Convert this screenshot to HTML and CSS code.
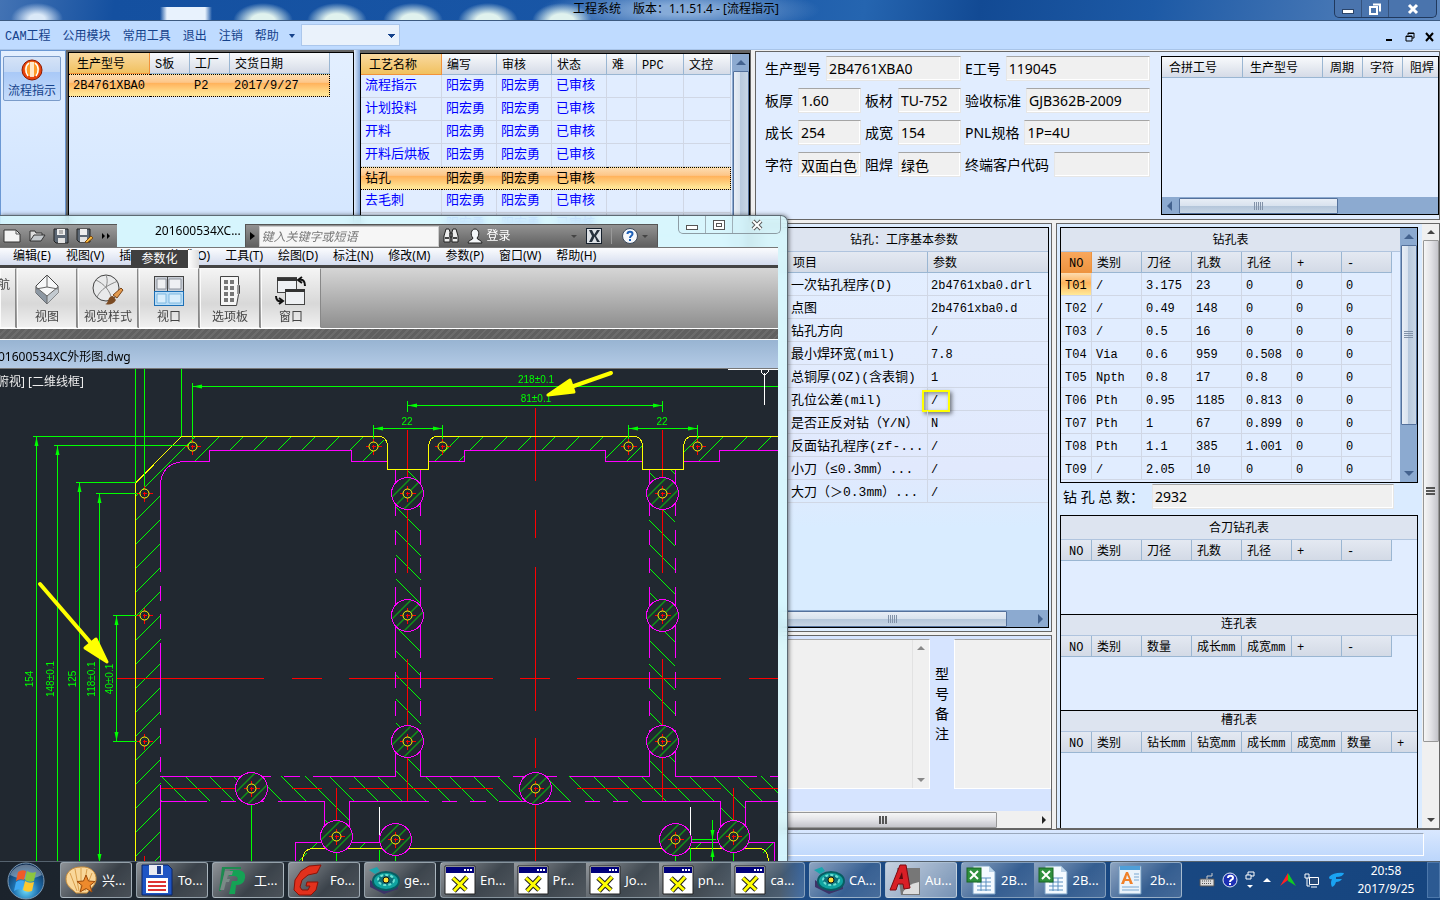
FILE: index.html
```html
<!DOCTYPE html>
<html lang="zh-CN">
<head>
  <meta charset="UTF-8" />
  <meta name="viewport" content="width=device-width, initial-scale=1.0" />
  <title>工程系统</title>
  <link rel="stylesheet" href="styles.css">
</head>

<body>

  <!-- Main window -->
  <div class="app">
    <header class="titlebar">
      <span class="titlebar-text">工程系统　版本：1.1.51.4 - [流程指示]</span>
      <div class="winbtns">
        <button aria-label="最小化"><svg width="14" height="12"><rect x="1.500" y="6.500" width="11" height="4" fill="#fff" stroke="#2b4468"/></svg></button>
        <button aria-label="还原"><svg width="14" height="14"><path d="M5 2.500h7v7M2 5h7v7H2z" fill="none" stroke="#fff" stroke-width="2"/></svg></button>
        <button class="wide" aria-label="关闭"><svg width="14" height="12"><path d="M3 2l8 8M11 2l-8 8" stroke="#fff" stroke-width="3"/></svg></button>
      </div>
    </header>

    <nav class="menubar">
      <a href="#">CAM工程</a>
      <a href="#">公用模块</a>
      <a href="#">常用工具</a>
      <a href="#">退出</a>
      <a href="#">注销</a>
      <a href="#">帮助</a>
      <span class="caret"></span>
      <select class="combo" aria-label="快速选择"><option></option></select>
      <div class="mdi">
        <button aria-label="最小化"><svg width="10" height="10"><path d="M1 8h6" stroke="#000" stroke-width="2"/></svg></button>
        <button aria-label="还原"><svg width="10" height="10"><path d="M3 3V1h6v5H7M1 4h6v5H1zM3 1.500h6M1 4.500h6" fill="none" stroke="#000"/></svg></button>
        <button aria-label="关闭"><svg width="10" height="10"><path d="M1 1l7 8M8 1L1 9" stroke="#000" stroke-width="2"/></svg></button>
      </div>
    </nav>

    <div class="workspace">
      <aside class="sidebar">
        <button class="side-btn">
          <svg width="24" height="22" viewBox="0 0 24 22">
            <circle cx="12" cy="11" r="10" fill="#e8420c" stroke="#8c1a00"/>
            <circle cx="12" cy="10" r="7.500" fill="#ff9c2a"/>
            <path d="M9 4c-4 3-4 9-1 13M11 3v15M13 3v15M15 4c4 3 4 9 1 13" fill="none" stroke="#fff" stroke-width="1.500"/>
          </svg>
          <span>流程指示</span>
        </button>
      </aside>

      <section class="orders grid-box">
        <table class="grid">
          <thead><tr><th class="hot w81">生产型号</th><th class="w40">S板</th><th class="w40">工厂</th><th class="w100">交货日期</th></tr></thead>
          <tbody><tr class="picked"><td>2B4761XBA0</td><td></td><td>P2</td><td>2017/9/27</td></tr></tbody>
        </table>
      </section>

      <div class="splitter"></div>

      <section class="process grid-box">
        <table class="grid blue">
          <thead><tr><th class="hot w81">工艺名称</th><th class="w55">编写</th><th class="w55">审核</th><th class="w55">状态</th><th class="w30">难</th><th class="w47">PPC</th><th class="w47">文控</th></tr></thead>
          <tbody id="process"></tbody>
        </table>
        <div class="vscroll blue-bar">
          <i class="up"></i>
          <div class="thumb fill"></div>
        </div>
      </section>

      <main class="main">
        <section class="info panel">
          <form class="fields">
            <div class="field"><label for="f1">生产型号</label><input id="f1" value="2B4761XBA0" readonly></div>
            <div class="field"><label for="f2">E工号</label><input id="f2" value="119045" readonly></div>
            <div class="pair">
              <div class="field"><label for="f3">板厚</label><input id="f3" value="1.60" readonly></div>
              <div class="field"><label for="f4">板材</label><input id="f4" value="TU-752" readonly></div>
            </div>
            <div class="field"><label for="f5">验收标准</label><input id="f5" value="GJB362B-2009" readonly></div>
            <div class="pair">
              <div class="field"><label for="f6">成长</label><input id="f6" value="254" readonly></div>
              <div class="field"><label for="f7">成宽</label><input id="f7" value="154" readonly></div>
            </div>
            <div class="field"><label for="f8">PNL规格</label><input id="f8" value="1P=4U" readonly></div>
            <div class="pair">
              <div class="field"><label for="f9">字符</label><input id="f9" value="双面白色字" readonly></div>
              <div class="field"><label for="f10">阻焊</label><input id="f10" value="绿色" readonly></div>
            </div>
            <div class="field"><label for="f11">终端客户代码</label><input id="f11" value="" readonly></div>
          </form>
          <div class="merge grid-box">
            <table class="grid">
              <thead><tr><th class="w81">合拼工号</th><th class="w80">生产型号</th><th class="w40">周期</th><th class="w40">字符</th><th class="w40">阻焊</th></tr></thead>
            </table>
            <div class="hscroll blue-bar">
              <i class="left"></i>
              <div class="thumb short"><b></b></div>
            </div>
          </div>
        </section>

        <div class="lower">
          <div class="middle">
            <section class="params panel">
              <div class="grid-box stack">
                <h3>钻孔：工序基本参数</h3>
                <table class="grid mixed">
                  <thead><tr><th class="w28"></th><th class="w140">项目</th><th class="w121">参数</th></tr></thead>
                  <tbody id="params"></tbody>
                </table>
                <div class="hscroll blue-bar">
                  <div class="thumb long"><b></b></div>
                  <i class="right"></i>
                </div>
              </div>
            </section>
            <section class="notes panel">
              <div class="notes-row">
                <div class="memo">
                  <textarea aria-label="备注" readonly></textarea>
                  <div class="vscroll gray-bar off"><i class="up"></i><i class="down"></i></div>
                </div>
                <label class="vlabel" for="remark">型号备注</label>
                <textarea id="remark" readonly></textarea>
              </div>
              <div class="hscroll gray-bar">
                <div class="thumb long"><b></b></div>
                <i class="right"></i>
              </div>
            </section>
          </div>

          <section class="holes panel">
            <div class="holes-body">
              <div class="grid-box drill">
                <div class="drill-main">
                  <h3>钻孔表</h3>
                  <table class="grid">
                    <thead><tr><th class="w31 now">NO</th><th class="w50">类别</th><th class="w50">刀径</th><th class="w50">孔数</th><th class="w50">孔径</th><th class="w50">+</th><th class="w50">-</th></tr></thead>
                    <tbody id="drill"></tbody>
                  </table>
                </div>
                <div class="vscroll blue-bar">
                  <i class="up"></i>
                  <div class="thumb mid"><b></b></div>
                  <i class="down"></i>
                </div>
              </div>
              <div class="total"><label for="total">钻 孔 总 数：</label><input id="total" value="2932" readonly></div>
              <div class="grid-box sub first">
                <h3>合刀钻孔表</h3>
                <table class="grid">
                  <thead><tr><th class="w31">NO</th><th class="w50">类别</th><th class="w50">刀径</th><th class="w50">孔数</th><th class="w50">孔径</th><th class="w50">+</th><th class="w50">-</th></tr></thead>
                </table>
              </div>
              <div class="grid-box sub">
                <h3>连孔表</h3>
                <table class="grid">
                  <thead><tr><th class="w31">NO</th><th class="w50">类别</th><th class="w50">数量</th><th class="w50">成长mm</th><th class="w50">成宽mm</th><th class="w50">+</th><th class="w50">-</th></tr></thead>
                </table>
              </div>
              <div class="grid-box sub last">
                <h3>槽孔表</h3>
                <table class="grid">
                  <thead><tr><th class="w31">NO</th><th class="w50">类别</th><th class="w50">钻长mm</th><th class="w50">钻宽mm</th><th class="w50">成长mm</th><th class="w50">成宽mm</th><th class="w50">数量</th><th class="w50">+</th></tr></thead>
                </table>
              </div>
            </div>
            <div class="vscroll gray-bar">
              <i class="up"></i>
              <div class="thumb tall"><b></b></div>
              <i class="down"></i>
            </div>
          </section>
        </div>
      </main>
    </div>

    <footer class="statusbar"><div></div></footer>
  </div>

  <!-- CAD window on top -->
  <div class="cad">
    <div class="cad-caption">
      <div class="quick">
        <button aria-label="新建"><svg width="18" height="16"><path d="M1 2h12l4 4v8H1z" fill="#f4f4f4" stroke="#333"/><path d="M13 2v4h4" fill="none" stroke="#555"/></svg></button>
        <button aria-label="打开"><svg width="18" height="16"><path d="M2 13V3h5l1 2h6v2" fill="#ddd" stroke="#333"/><path d="M2 13l4-6h11l-4 6z" fill="#c4c9cd" stroke="#333"/></svg></button>
        <button aria-label="保存"><svg width="16" height="16"><path d="M1 1h14v14H3l-2-2z" fill="#5d6875" stroke="#222"/><path d="M4 1h8v6H4z" fill="#eee"/><path d="M5 10h7v5H5z" fill="#e2e2e2"/><path d="M6 3h4M6 5h4" stroke="#777"/></svg></button>
        <button aria-label="另存为"><svg width="18" height="16"><path d="M1 1h13v13H3l-2-2z" fill="#5d6875" stroke="#222"/><path d="M4 1h7v6H4z" fill="#eee"/><path d="M4 9h7v5H4z" fill="#e2e2e2"/><path d="M9 14l6-6 2 2-6 5z" fill="#f6b93f" stroke="#7c4a10"/></svg></button>
        <button aria-label="更多"><svg width="10" height="8"><path d="M1 1l3 3-3 3zM6 1l3 3-3 3z" fill="#000"/></svg></button>
      </div>
      <div class="cad-name">201600534XC...</div>
      <div class="infocenter">
        <button class="play" aria-label="展开"><svg width="5" height="8"><path d="M0 0l5 4-5 4z" fill="#000"/></svg></button>
        <input class="search" placeholder="键入关键字或短语" aria-label="搜索">
        <svg width="16" height="16"><path d="M3 1h3l1 3v10H1V8zM10 1h3l2 7v6H9V4z" fill="#eee" stroke="#222"/><path d="M7 5h2v4H7z" fill="#888" stroke="#222"/><path d="M2 10h4M10 10h4" stroke="#444" stroke-width="2"/></svg>
        <svg class="user" width="16" height="16"><path d="M1 15c0-3 5-3 5-5C3 7 4 1 8 1s5 6 2 9c0 2 5 2 5 5z" fill="#f4f6f8" stroke="#222"/></svg>
        <span class="login">登录</span>
        <i class="dn"></i>
        <svg width="16" height="16"><rect x=".5" y=".5" width="15" height="15" fill="#dde1e6" stroke="#16202c"/><path d="M3 2l3 6-3 6h3l3-6-3-6zM14 2h-3L8 7l3 7h3l-4-6z" fill="#26303c"/></svg>
        <span class="bar"></span>
        <svg width="18" height="18" viewBox="0 0 18 18"><circle cx="9" cy="9" r="7.500" fill="#f5f8fc" stroke="#3c4a5c"/><path d="M6.500 7c0-3 5-3 5 0 0 2-2.500 1.500-2.500 4M9 12v2" fill="none" stroke="#1b5fb8" stroke-width="2"/></svg>
        <i class="dn"></i>
      </div>
      <div class="glass-btns">
        <button aria-label="最小化"><svg width="14" height="12"><rect x="1.500" y="6.500" width="11" height="4" fill="#fff" stroke="#555"/></svg></button>
        <button aria-label="最大化"><svg width="14" height="12"><rect x="1.500" y="1.500" width="11" height="9" fill="#fff" stroke="#555"/><rect x="4.500" y="4.500" width="5" height="3" fill="#fff" stroke="#555"/></svg></button>
        <button class="wide" aria-label="关闭"><svg width="14" height="12"><path d="M3 2l8 8M11 2l-8 8" stroke="#555" stroke-width="4"/><path d="M3 2l8 8M11 2l-8 8" stroke="#fff" stroke-width="2"/></svg></button>
      </div>
    </div>

    <nav class="cad-menu">
      <a href="#">编辑(E)</a><a href="#">视图(V)</a><a href="#">插入(I)</a><a href="#">格式(O)</a><a href="#">工具(T)</a><a href="#">绘图(D)</a><a href="#">标注(N)</a><a href="#">修改(M)</a><a href="#">参数(P)</a><a href="#">窗口(W)</a><a href="#">帮助(H)</a>
      <div class="tab-pop"><span>参数化</span><i></i></div>
    </nav>

    <div class="ribbon">
      <button class="cut">航</button>
      <button>
        <svg width="30" height="34" viewBox="0 0 30 34"><path d="M15 2l11 11v7L15 31 4 20v-7z" fill="#f7f8f9" stroke="#444"/><path d="M4 14l11 9v8L4 20z" fill="#8d98a3"/><path d="M26 14l-11 9v8l11-11z" fill="#c3cad0"/><path d="M15 2v12L4 16M15 14l11 2M15 23v8M4 14l11 9 11-9" fill="none" stroke="#666"/></svg>
        <span>视图</span>
      </button>
      <button>
        <svg width="34" height="34" viewBox="0 0 34 34"><circle cx="15" cy="15" r="13" fill="#e9eaeb" stroke="#444"/><path d="M5 7c8 4 14 10 16 20M27 8C17 12 10 16 6 24M15 2c2 5 1 9 0 13" fill="none" stroke="#888"/><path d="M22 22l8-7 2 2-6 8z" fill="#e39a4e" stroke="#7a4417"/><path d="M14 31c4 0 2-8 8-8l3 4c-3 5-7 5-11 4z" fill="#7a4a22"/></svg>
        <span>视觉样式</span>
      </button>
      <button>
        <svg width="32" height="32" viewBox="0 0 32 32"><rect x="1.500" y="1.500" width="29" height="15" fill="#c9ced6" stroke="#444"/><path d="M4 4h9v10H4zM16 4h12v10H16z" fill="#eef0f3" stroke="#8c929c"/><path d="M14.500 1v15" stroke="#444"/><rect x="1.500" y="16.500" width="29" height="14" fill="#b9dcf5" stroke="#1d6fb5"/><path d="M4 19h9v9H4zM16 19h12v9H16z" fill="#d8edfb" stroke="#7fb9e2"/></svg>
        <span>视口</span>
      </button>
      <button>
        <svg width="24" height="32" viewBox="0 0 24 32"><path d="M2.500 1.500h18v8l1 1v8l-1 1-2 11h-16z" fill="#f6f6f6" stroke="#444"/><path d="M6 5h4v4H6zM12 5h4v4h-4zM6 11h4v4H6zM12 11h4v4h-4zM6 17h4v4H6zM12 17h4v4h-4zM6 23h4v4H6zM12 23h4v4h-4z" fill="#777"/><path d="M19 10h2v9h-2z" fill="#999"/></svg>
        <span>选项板</span>
      </button>
      <button>
        <svg width="32" height="32" viewBox="0 0 32 32"><rect x="2.500" y="2.500" width="19" height="15" fill="#eef0f3" stroke="#444"/><path d="M2 3h20v3H2z" fill="#333"/><rect x="10.500" y="14.500" width="19" height="15" fill="#eef0f3" stroke="#444"/><path d="M10 14h20v3H10z" fill="#333"/><path d="M24 5c4-1 6 1 6 6M27 2l-4 3 4 3M1 21c0 4 2 6 6 5M4 23l4 3-4 3" fill="none" stroke="#111" stroke-width="2"/></svg>
        <span>窗口</span>
      </button>
    </div>
    <div class="dock"></div>
    <div class="doc-title">01600534XC外形图.dwg</div>

    <svg class="drawing" width="778" height="492" viewBox="0 369 778 492" shape-rendering="crispEdges">
      <defs>
        <pattern id="hatchA" x="8" y="0" width="24" height="24" patternUnits="userSpaceOnUse"><path d="M-2 26L26-2M-2 2L2-2M22 26L26 22" stroke="#0f0" shape-rendering="auto"/></pattern>
        <pattern id="hatchB" x="0" y="15" width="24" height="24" patternUnits="userSpaceOnUse"><path d="M-2-2L26 26M22-2L26 2M-2 22L2 26" stroke="#0f0" shape-rendering="auto"/></pattern>
        <pattern id="hatchC" width="12" height="12" patternUnits="userSpaceOnUse"><path d="M-2 14L14-2M-2 2L2-2M10 14L14 10" stroke="#0f0" shape-rendering="auto"/></pattern>
        <g id="hole">
          <path d="M-8 0h16M0-8v16" stroke="#f00"/>
          <circle r="4.500" fill="#212830" stroke="#ff0" shape-rendering="auto"/>
          <path d="M-2 0h4M0-2v4" stroke="#f00"/>
        </g>
        <g id="pad">
          <circle r="16" fill="#212830"/>
          <circle r="16" fill="url(#hatchC)" stroke="#f0f"/>
          <use href="#hole"/>
        </g>
        <path id="head" d="M0 0l9-2v4z" fill="#0f0"/>
      </defs>

      <!-- hatching -->
      <path fill="url(#hatchA)" d="M136 861V483l46-47h198l7 8v17h-36v-11H209v11h-26q-20 3-22 22v378zM429 461v-18l7-7h199l7 7v18h-37v-11H464v11zM684 461v-18l7-7h87v14h-59v11z"/>
      <path fill="url(#hatchB)" d="M396 470h25v306h228V470h26v306h103v25h-32v35h-26v-35H350v35h-26v-35H161v-25h235z"/>
      <path fill="url(#hatchA)" d="M296 861v-18h84v5h-70l-8 13zM690 843h84v18h-6l-8-13h-70z"/>

      <!-- centre lines -->
      <g stroke="#f00" fill="none">
        <path d="M117 678.500h147M292 678.500h30M349 678.500h144M520 678.500h30M577 678.500h144M749 678.500h29"/>
        <path d="M160 788.500h104M292 788.500h30M349 788.500h144M520 788.500h30M577 788.500h144M749 788.500h29"/>
        <path d="M407.500 430v143M407.500 659v143M662.500 430v143M662.500 659v143M336.500 788v62M733.500 788v62M144.500 856v5"/>
        <path d="M535.500 408v73M535.500 510v28M535.500 567v144M535.500 738v30M535.500 782v79"/>
      </g>

      <!-- inner contour -->
      <g stroke="#f0f" fill="none">
        <path d="M160.500 572v-89q2-19 22-21.500h27v-11h142v11h36M429 461.500h35.500v-11h141v11h37M684 461.500h35.500v-11H778"/>
        <path d="M160.500 586v15M160.500 614v15M160.500 643v72M160.500 728v16M160.500 757v15M160.500 785v76"/>
        <path d="M395.500 470v46M395.500 530v15M395.500 558v15M395.500 587v71M395.500 672v16M395.500 701v15M395.500 730v46.500H313M300 776.500h-16M271 776.500H160"/>
        <path d="M420.500 470v46M420.500 530v15M420.500 558v15M420.500 587v71M420.500 672v16M420.500 701v15M420.500 730v46.500H500M513 776.500h44M570 776.500h79.500V730"/>
        <path d="M649.500 470v46M649.500 530v15M649.500 558v15M649.500 587v71M649.500 672v16M649.500 701v15"/>
        <path d="M675.500 470v46M675.500 530v15M675.500 558v15M675.500 587v71M675.500 672v16M675.500 701v15M675.500 730v46.500H757M770 776.500h8"/>
        <path d="M160 801.500h47M221 801.500h15M249 801.500h15M278 801.500h46.500v41M349.500 842v-40.500H429M442 801.500h15M470 801.500h16M499 801.500h72M585 801.500h15M613 801.500h15M642 801.500h78.500v41M745.500 842v-40.500H778"/>
        <path d="M295.500 861v-18.500H380M690 842.500h84.500V861"/>
      </g>

      <!-- board outline -->
      <g stroke="#ff0" fill="none">
        <path d="M135.500 861V483l46-46.500H380q7 1 7.500 9v24h41V446q1-9 8-9.500H635q7 1 7.500 9v24h41V446q1-9 8-9.500H778"/>
        <path d="M302.500 861q0-11 9-12.500H760q8 1 8.500 12.500"/>
      </g>

      <!-- dimensions -->
      <g stroke="#0f0" fill="none">
        <path d="M135.500 369v114M144.500 369v124M181.500 369v67M192.500 383v63M192 386.500h586"/>
        <path d="M33 436.500h148M36.500 436v425M54 445.500h138M57.500 445v416M76 482.500h59M79.500 482v379M96 493.500h48M99.500 493v368M113 615.500h31M113 741.500h31M116.500 615v126"/>
        <path d="M407 405.500h255M407.500 401v11M662.500 401v11M373 428.500h69M628 428.500h69M373.500 425v21M442.500 425v21M628.500 425v21M697.500 425v21"/>
        <path d="M251.500 789v72M336.500 836v25M379.500 850v11M395.500 840v21M675.500 840v21M690.500 848v13M733.500 836v25M712.500 820v41M675 839.500h41"/>
      </g>
      <g shape-rendering="auto">
        <use href="#head" x="193" y="386.500"/>
        <use href="#head" x="408" y="405.500"/>
        <use href="#head" x="374" y="428.500"/>
        <use href="#head" x="629" y="428.500"/>
        <use href="#head" transform="translate(662 405.500) rotate(180)"/>
        <use href="#head" transform="translate(442 428.500) rotate(180)"/>
        <use href="#head" transform="translate(697 428.500) rotate(180)"/>
        <use href="#head" transform="translate(36.500 437) rotate(90)"/>
        <use href="#head" transform="translate(57.500 446) rotate(90)"/>
        <use href="#head" transform="translate(79.500 483) rotate(90)"/>
        <use href="#head" transform="translate(99.500 494) rotate(90)"/>
        <use href="#head" transform="translate(116.500 616) rotate(90)"/>
        <use href="#head" transform="translate(116.500 741) rotate(270)"/>
        <use href="#head" transform="translate(99.500 863) rotate(270)"/>
        <use href="#head" transform="translate(712.500 839) rotate(270)"/>
        <use href="#head" transform="translate(712.500 848) rotate(90)"/>
      </g>
      <g class="dim">
        <text x="536" y="383">218±0.1</text>
        <text x="536" y="402">81±0.1</text>
        <text x="407" y="425">22</text>
        <text x="662" y="425">22</text>
        <text transform="translate(33 679) rotate(-90)">154</text>
        <text transform="translate(54 679) rotate(-90)">148±0.1</text>
        <text transform="translate(76 679) rotate(-90)">125</text>
        <text transform="translate(95 679) rotate(-90)">118±0.1</text>
        <text transform="translate(113 679) rotate(-90)">40±0.1</text>
      </g>

      <!-- holes -->
      <use href="#hole" x="192.500" y="446.500"/><use href="#hole" x="144.500" y="493.500"/><use href="#hole" x="144.500" y="615.500"/><use href="#hole" x="144.500" y="741.500"/>
      <use href="#hole" x="373.500" y="446.500"/><use href="#hole" x="442.500" y="446.500"/><use href="#hole" x="628.500" y="446.500"/><use href="#hole" x="697.500" y="446.500"/>
      <use href="#pad" x="407.500" y="493.500"/><use href="#pad" x="407.500" y="615.500"/><use href="#pad" x="407.500" y="741.500"/>
      <use href="#pad" x="662.500" y="493.500"/><use href="#pad" x="662.500" y="615.500"/><use href="#pad" x="662.500" y="741.500"/>
      <use href="#pad" x="251.500" y="788.500"/><use href="#pad" x="535.500" y="788.500"/>
      <use href="#pad" x="336.500" y="836.500"/><use href="#pad" x="395.500" y="839.500"/><use href="#pad" x="675.500" y="839.500"/><use href="#pad" x="733.500" y="836.500"/>

      <path d="M379.500 807v28M690.500 807v28M728 369.500h50M764.500 373v32M761 370v2l2 2h3l2-2v-2" fill="none" stroke="#fff"/>
      <text class="view-label" x="84" y="386">俯视] [二维线框]</text>

      <!-- marker arrows -->
      <g shape-rendering="auto" fill="#ff0" stroke="#ff0" stroke-linecap="round" stroke-linejoin="round">
        <path d="M40 584l50 58" stroke-width="4"/>
        <path d="M107 662l-11-23-11 9z" stroke-width="3"/>
        <path d="M611 373l-40 14" stroke-width="4"/>
        <path d="M548 395l22-15 4 12z" stroke-width="3"/>
      </g>
    </svg>
  </div>

  <!-- Taskbar -->
  <svg class="sprites" width="0" height="0">
    <symbol id="i-x" viewBox="0 0 32 32"><path d="M1 2h30v28H1z" fill="#fff" stroke="#222"/><path d="M2 3h28v6H2z" fill="#00007b"/><path d="M20 5h2v2h-2zM23 5h2v2h-2zM26 5h2v2h-2z" fill="#fff"/><path d="M9 14l13 12M23 13L10 27" stroke="#222" stroke-width="5"/><path d="M9 14l13 12M23 13L10 27" stroke="#ff0" stroke-width="3"/></symbol>
    <symbol id="i-cam" viewBox="0 0 32 32"><path d="M1 6l8-3 3 4-5 3z" fill="#1ba6ad"/><path d="M2 16l14 10 14-6v5l-14 5L2 23z" fill="#3c3468"/><ellipse cx="18" cy="17" rx="13" ry="9" fill="#10a3a0" stroke="#075e63" stroke-width="2"/><ellipse cx="18" cy="16" rx="8" ry="5" fill="#0b6f78" stroke="#6ce0d2" stroke-dasharray="3 2" stroke-width="2"/><circle cx="18" cy="16" r="3" fill="#ffe03a" stroke="#111"/></symbol>
    <symbol id="i-xls" viewBox="0 0 32 32"><path d="M8 2h16l6 6v22H8z" fill="#f4faff" stroke="#7aa0c4"/><path d="M24 2v6h6z" fill="#bcd3e8"/><path d="M12 14h14M12 18h14M12 22h14M12 26h14M16 14v13M21 14v13" stroke="#5b8fc0"/><rect x="2" y="4" width="14" height="14" fill="#2f8f3c" stroke="#186423"/><path d="M5 7l8 8M13 7l-8 8" stroke="#fff" stroke-width="2"/></symbol>
  </svg>
  <div class="taskbar">
    <button class="start" aria-label="开始">
      <svg width="40" height="38" viewBox="0 0 40 38">
        <defs><radialGradient id="orb" cx=".5" cy=".75" r=".7"><stop offset="0" stop-color="#6fe0ff"/><stop offset=".5" stop-color="#1d6fae"/><stop offset="1" stop-color="#0d2c52"/></radialGradient></defs>
        <circle cx="20" cy="19" r="18" fill="url(#orb)" stroke="#7c9ab5"/>
        <path d="M4 13a17 16 0 0 1 32 0q-16 8-32 0z" fill="#fff" opacity=".35"/>
        <path d="M12 10q4-3 8-1l-2 9q-4-2-8 1z" fill="#f05a28"/><path d="M21 9q4 3 9 1l-2 9q-5 2-9-1z" fill="#8cc63f"/>
        <path d="M10 20q4-3 8-1l-2 9q-4-2-8 1z" fill="#3fa9f5"/><path d="M19 19q4 3 9 1l-2 9q-5 2-9-1z" fill="#fdc82f"/>
      </svg>
    </button>
    <button class="task"><svg width="34" height="32" viewBox="0 0 34 32"><path d="M17 3c10-1 16 6 15 13-1 6-6 9-9 13H12C8 25 2 22 2 15 2 8 8 3 17 3z" fill="#f9d79a" stroke="#c98d3a"/><path d="M17 4v24M11 5l4 22M23 5l-4 22M6 9l7 18M28 9l-7 18" stroke="#d99f4c" fill="none"/><path d="M22 11l2.500 6 6.500.5-5 4 2 6.500-6-3.500-6 3.500 2-6.500-5-4 6.500-.5z" fill="#ee8a2c" stroke="#9c4b0c"/></svg>兴...</button>
    <button class="task"><svg width="34" height="32" viewBox="0 0 34 32"><path d="M2 1h26l4 4v26H2z" fill="#1f55c4" stroke="#0b2566"/><path d="M9 1h14v10H9z" fill="#e9ecf2"/><path d="M17 2h4v8h-4z" fill="#1f3f8c"/><path d="M6 14h22v15H6z" fill="#fff"/><path d="M8 18h18M8 22h18M8 26h18" stroke="#d33" stroke-width="2"/></svg>To...</button>
    <button class="task"><svg width="34" height="32" viewBox="0 0 34 32"><path d="M6 3h19v2H9L5 27H3z" fill="#1d8a50"/><path d="M14 6h9q7 1 6 8-1 7-8 7h-1l-1 9h-6l3-13h5q2-4-2-5h-6z" fill="#15a255"/><path d="M9 7h8l-1 4h-4l-1 4h3l-1 3h-3l-2 8H4z" fill="#7a8a86"/></svg>工...</button>
    <button class="task"><svg width="34" height="32" viewBox="0 0 34 32"><path d="M29 1l-4 8-9 2-6 5-2 7 2 3h6l2-4h-4l1-4h11l-2 8-5 5H7l-5-5 1-10 6-9 8-5z" fill="#e2311d" stroke="#8c1207"/></svg>Fo...</button>
    <button class="task"><svg width="32" height="32"><use href="#i-cam"/></svg>ge...</button>
    <div class="group">
      <button class="task"><svg width="32" height="32"><use href="#i-x"/></svg>En...</button>
      <button class="task"><svg width="32" height="32"><use href="#i-x"/></svg>Pr...</button>
      <button class="task"><svg width="32" height="32"><use href="#i-x"/></svg>Jo...</button>
      <button class="task"><svg width="32" height="32"><use href="#i-x"/></svg>pn...</button>
      <button class="task"><svg width="32" height="32"><use href="#i-x"/></svg>ca...</button>
    </div>
    <button class="task"><svg width="32" height="32"><use href="#i-cam"/></svg>CA...</button>
    <button class="task active"><svg width="32" height="32" viewBox="0 0 32 32"><path d="M8 4h23v27H12z" fill="#777"/><path d="M14 28q4-8 16-10v12H14z" fill="#ddd"/><path d="M1 26L11 1h6l4 23-6 1-1-5H9l-2 6z" fill="#d81f26" stroke="#7c0a10"/><path d="M10 15h4l-1-7z" fill="#5c0a0e"/></svg>Au...</button>
    <div class="group pair-xls">
      <button class="task"><svg width="32" height="32"><use href="#i-xls"/></svg>2B...</button>
      <button class="task"><svg width="32" height="32"><use href="#i-xls"/></svg>2B...</button>
    </div>
    <button class="task"><svg width="32" height="32" viewBox="0 0 32 32"><path d="M5 2h22v28H5z" fill="#eaf3fb" stroke="#6f97bd"/><path d="M6 2h20v4H6z" fill="#4f9fd8"/><path d="M7 20l5-12h2l5 12h-3l-1-3h-4l-1 3zm5-5h3l-2-4z" fill="#f0812a"/><path d="M20 10h5M20 13h5M20 16h5M8 23h17M8 26h17" stroke="#7aa7d0"/></svg>2b...</button>

    <div class="tray">
      <svg width="16" height="16"><path d="M1 7h14v7H1z" fill="#ddd" stroke="#555"/><path d="M3 9h10M3 11.500h10" stroke="#555" stroke-dasharray="1 1"/><path d="M8 7V4h5V1" fill="none" stroke="#ccc"/></svg>
      <svg width="16" height="16"><circle cx="8" cy="8" r="7" fill="#1c2fb4" stroke="#dfe6f5"/><path d="M6 6c0-3 5-3 5 0 0 2-3 1.500-3 4M8 11v2" fill="none" stroke="#fff" stroke-width="2"/></svg>
      <svg width="10" height="18"><path d="M3 4V1h6v4H6M1 4h5v4H1z" fill="none" stroke="#fff"/><path d="M2 14h6l-3 3z" fill="#fff"/></svg>
      <svg width="10" height="8"><path d="M1 6h8L5 2z" fill="#fff"/></svg>
      <svg width="18" height="16"><path d="M9 1v7L1 14z" fill="#f22"/><path d="M9 1l8 13-8-5z" fill="#1c2"/></svg>
      <svg width="16" height="16"><path d="M5.500 5.500h9v7h-9zM7 15h6" fill="#274a78" stroke="#fff"/><path d="M1 2h4v4H1zM3 6v8h3" fill="none" stroke="#fff"/></svg>
      <svg width="18" height="16"><path d="M2 5q5-5 15-4-1 4-8 4v2h6q-2 3-6 3-1 4-4 5-2-4 0-8-3 1-3-2z" fill="#1aa3f2"/></svg>
    </div>
    <div class="clock"><span>20:58</span><span>2017/9/25</span></div>
    <button class="peek" aria-label="显示桌面"></button>
  </div>

  <script>
    const steps = ['流程指示', '计划投料', '开料', '开料后烘板', '钻孔', '去毛刺', ''];
    const params = [
      ['一次钻孔程序(D)', '2b4761xba0.drl'],
      ['点图', '2b4761xba0.d'],
      ['钻孔方向', '/'],
      ['最小焊环宽(mil)', '7.8'],
      ['总铜厚(OZ)(含表铜)', '1'],
      ['孔位公差(mil)', '/'],
      ['是否正反对钻（Y/N）', 'N'],
      ['反面钻孔程序(zf-...', '/'],
      ['小刀（≤0.3mm）...', '/'],
      ['大刀（＞0.3mm）...', '/']
    ];
    const drill = [
      ['T01', '/', '3.175', '23', '0', '0', '0'],
      ['T02', '/', '0.49', '148', '0', '0', '0'],
      ['T03', '/', '0.5', '16', '0', '0', '0'],
      ['T04', 'Via', '0.6', '959', '0.508', '0', '0'],
      ['T05', 'Npth', '0.8', '17', '0.8', '0', '0'],
      ['T06', 'Pth', '0.95', '1185', '0.813', '0', '0'],
      ['T07', 'Pth', '1', '67', '0.899', '0', '0'],
      ['T08', 'Pth', '1.1', '385', '1.001', '0', '0'],
      ['T09', '/', '2.05', '10', '0', '0', '0']
    ];

    function row(cells, cls) {
      return `<tr class="${cls || ''}">` + cells.map(c => `<td>${c}</td>`).join('') + '</tr>';
    }

    document.getElementById('process').innerHTML = steps
      .map(s => row([s, '阳宏勇', '阳宏勇', '已审核', '', '', ''], s === '钻孔' ? 'picked' : '')).join('');

    document.getElementById('params').innerHTML = params
      .map(p => row(['', p[0], p[0].startsWith('孔位公差') ? `<span class="mark">${p[1]}</span>` : p[1]])).join('');

    document.getElementById('drill').innerHTML = drill
      .map((d, i) => row(d, i === 0 ? 'first' : '')).join('');
  </script>

</body>
</html>
```

FILE: styles.css
```css
* {
  box-sizing: border-box;
}

body {
  margin: 0;
  height: 100vh;
  display: flex;
  flex-direction: column;
  overflow: hidden;
  position: relative;
  font-family: "Liberation Mono", "Noto Sans CJK SC", monospace;
  font-size: 12px;
  line-height: 16px;
  color: #000;
  background: #12508f;
}

button {
  border: none;
  background: none;
  padding: 0;
  font: inherit;
  color: inherit;
}

a {
  color: inherit;
  text-decoration: none;
}

svg {
  display: block;
  flex: none;
}

.app {
  flex: 1;
  min-height: 0;
  display: flex;
  flex-direction: column;
}

/* title bar */
.titlebar {
  height: 21px;
  flex: none;
  display: flex;
  justify-content: center;
  position: relative;
  padding: 1px 88px 0 0;
  border-bottom: 1px solid #3c5a80;
  background:
    radial-gradient(ellipse 26px 16px at 37px 19px, #dbe9f8 30%, transparent),
    linear-gradient(90deg, transparent 160px, #e8f2fd 167px 205px, transparent 212px) 0 7px no-repeat,
    radial-gradient(ellipse 30px 18px at 263px 21px, #e0f2ee 40%, transparent),
    radial-gradient(ellipse 30px 18px at 337px 21px, #e0f2ee 40%, transparent),
    radial-gradient(ellipse 30px 18px at 413px 21px, #e0f2ee 40%, transparent),
    radial-gradient(ellipse 30px 18px at 488px 21px, #e0f2ee 40%, transparent),
    radial-gradient(ellipse 30px 18px at 562px 21px, #e0f2ee 40%, transparent),
    radial-gradient(ellipse 140px 24px at 680px 10px, #86abd8 20%, transparent),
    linear-gradient(100deg, #4373b4 0, #1450a0 8%, #1a58a8 50%, #2565b0 60%, #124a94 68%, #1d5aa6 80%, #5c86bd 100%);
}

.titlebar-text {
  font-family: "Noto Sans", "Noto Sans CJK SC", sans-serif;
}

.winbtns {
  position: absolute;
  top: 0;
  right: 3px;
  display: flex;
  border: 1px solid #20395e;
  border-top: none;
  border-radius: 0 0 5px 5px;
  background: #4a74ad;
}

.winbtns button,
.glass-btns button {
  width: 27px;
  height: 17px;
  display: flex;
  align-items: center;
  justify-content: center;
  border-right: 1px solid #35527c;
}

.winbtns .wide,
.glass-btns .wide {
  width: 47px;
  border-right: none;
}

/* menu */
.menubar {
  height: 29px;
  flex: none;
  display: flex;
  align-items: center;
  gap: 12px;
  padding: 0 5px;
  color: #15428b;
  background: #bfdbff;
  border-bottom: 1px solid #a8c4e8;
}

.menubar a {
  padding-top: 4px;
}

.caret {
  border: 3px solid transparent;
  border-top: 4px solid #15428b;
  border-bottom: none;
  margin: 2px 0 0 -2px;
}

.combo {
  width: 99px;
  height: 22px;
  margin-left: -6px;
  border: 1px solid #abc7ec;
  border-radius: 0;
  appearance: none;
  background:
    linear-gradient(45deg, transparent 50%, #15428b 50%) 86px 9px / 4px 4px no-repeat,
    linear-gradient(-45deg, transparent 50%, #15428b 50%) 90px 9px / 4px 4px no-repeat,
    #eaf2fb;
}

.mdi {
  margin: 4px 0 0 auto;
  display: flex;
  gap: 10px;
}

/* workspace */
.workspace {
  flex: 1;
  min-height: 0;
  display: flex;
  background: #646464;
}

.sidebar {
  width: 66px;
  flex: none;
  padding: 5px 2px;
  border: 1px solid #6b98d4;
  border-width: 1px 1px 0;
  background: linear-gradient(#e3efff, #d0e4ff 20%);
}

.side-btn {
  width: 58px;
  height: 45px;
  display: flex;
  flex-direction: column;
  align-items: center;
  gap: 3px;
  padding-top: 2px;
  border: 1px solid #7a9bc9;
  border-radius: 2px;
  color: #15428b;
  background: linear-gradient(#d5e3f7 0, #c3d8f5 35%, #a9c9f7 36%, #c5dcfb);
}

.grid-box {
  border: 1px solid #000;
  background: #e1edff;
  overflow: hidden;
}

.orders {
  width: 286px;
  flex: none;
  margin: 2px 0 0 2px;
  background: linear-gradient(#e3efff, #d5e7ff 20%);
}

.splitter {
  width: 6px;
  flex: none;
  background: linear-gradient(90deg, #e3efff, #7fa3d6);
}

.process {
  width: 390px;
  flex: none;
  display: flex;
  justify-content: space-between;
  align-items: stretch;
  margin-top: 3px;
}

/* grids */
.grid {
  table-layout: fixed;
  width: 0;
  border-collapse: separate;
  border-spacing: 0;
  align-self: flex-start;
}

.grid th {
  height: 21px;
  padding: 3px 0 0 5px;
  font-weight: normal;
  text-align: left;
  white-space: nowrap;
  overflow: hidden;
  border-right: 1px solid #9ab6d2;
  border-bottom: 1px solid #9ab6d2;
  background: linear-gradient(#f8fafc, #d5dbe7);
}

.grid td {
  height: 23px;
  padding: 0 0 0 3px;
  white-space: nowrap;
  overflow: hidden;
  border-right: 1px solid #d0d7e5;
  border-bottom: 1px solid #d0d7e5;
}

.grid .hot {
  padding-left: 8px;
  background: linear-gradient(#f9d9a0, #f1c15f);
  border-color: #f2923a;
}

.blue td,
.mixed td {
  font-size: 13px;
}

.blue td {
  color: #00f;
}

.orders td {
  padding-left: 4px;
  border-right: none;
}

.orders td,
.blue td {
  padding-left: 4px;
}

.grid.mixed td:last-child {
  font-size: 12px;
}

.grid.mixed td {
  position: relative;
  overflow: visible;
  padding-top: 3px;
}

.drill .grid td {
  padding: 3px 0 0 4px;
}

.grid .picked td {
  color: #000;
  border-right: none;
  border-top: 1px dotted #000;
  border-bottom: 1px dotted #000;
  background: linear-gradient(#fcdcb0 0, #fdc688 35%, #ffb35c 40%, #ffe394 90%);
}

.grid .picked td:last-child {
  border-right: 1px dotted #000;
}

.grid .first td:first-child {
  background: linear-gradient(#fcdcb0, #ffb35c 45%, #ffea98);
}

.w28 { width: 28px; }
.w30 { width: 30px; }
.w31 { width: 31px; }
.w40 { width: 40px; }
.w47 { width: 47px; }
.w50 { width: 50px; }
.w55 { width: 55px; }
.w80 { width: 80px; }
.w81 { width: 81px; }
.w100 { width: 100px; }
.w121 { width: 121px; }
.w140 { width: 140px; }

.holes .w31 {
  padding-left: 8px;
}

.mark::before {
  content: "";
  box-sizing: border-box;
  position: absolute;
  left: -6px;
  top: 2px;
  width: 28px;
  height: 22px;
  border: 2px solid #ff0;
  box-shadow: 2px 2px 4px rgba(0,0,0,0.5), inset 2px 2px 4px rgba(0,0,0,0.4);
}

h3 {
  margin: 0;
  height: 24px;
  line-height: 26px;
  font-size: 12px;
  font-weight: normal;
  text-align: center;
  background: #dde4f0;
  border-bottom: 1px solid #b0c4de;
}

.holes .grid th,
.params .grid th {
  background: linear-gradient(#e4e9f2, #d3dae6);
}

.holes .grid .now {
  background: linear-gradient(#f9a75c, #ee9440);
  border-color: #ee9440;
}

/* right side */
.main {
  flex: 1;
  min-width: 0;
  display: flex;
  flex-direction: column;
  gap: 3px;
  padding: 1px 0 0 4px;
  margin-left: 1px;
  background: #f0f0f0;
}

.panel {
  border: 1px solid #666;
  background: #e1edff;
}

.info {
  height: 169px;
  flex: none;
  display: flex;
  gap: 11px;
  padding: 4px 0 4px 9px;
}

.fields {
  display: grid;
  grid-template-columns: 196px 185px;
  gap: 7px 4px;
  align-content: start;
}

.pair {
  display: grid;
  grid-template-columns: 96px 96px;
  gap: 4px;
}

.field,
.total {
  display: flex;
  align-items: center;
  gap: 5px;
  height: 25px;
  font: 14px/20px "Noto Sans", "Noto Sans CJK SC", sans-serif;
}

.field label,
.total label {
  flex: none;
}

input {
  flex: 1;
  min-width: 0;
  height: 25px;
  padding: 0 2px;
  font: inherit;
  border: 1px solid #e6e6e6;
  border-top-color: #a5a5a5;
  background: #f0f0f0;
  box-shadow: inset -1px -1px #fff;
}

.merge {
  flex: 1;
  min-width: 0;
  display: flex;
  flex-direction: column;
  justify-content: space-between;
}

.merge .grid th {
  padding-left: 7px;
}

.lower {
  flex: 1;
  min-height: 0;
  display: flex;
  gap: 4px;
}

.middle {
  width: 297px;
  flex: none;
  display: flex;
  flex-direction: column;
  gap: 3px;
}

.params {
  flex: 1;
  min-height: 0;
  display: flex;
  padding: 3px 2px 3px 3px;
  background: #deedff;
}

.stack {
  flex: 1;
  min-width: 0;
  display: flex;
  flex-direction: column;
  background: linear-gradient(#e3efff, #e1e9fd 60%, #d9ecff 75%);
}

.stack .hscroll {
  margin-top: auto;
}

.notes {
  height: 194px;
  flex: none;
  display: flex;
  flex-direction: column;
  background: #d6e4ff;
}

.notes-row {
  flex: 1;
  display: flex;
  padding: 3px 0 22px 3px;
}

.memo {
  width: 171px;
  display: flex;
  background: #f0f0f0;
  border: 1px solid #fff;
  border-top-color: #a5a5a5;
}

textarea {
  flex: 1;
  min-width: 0;
  resize: none;
  padding: 0;
  overflow: hidden;
  border: 1px solid #fff;
  border-top-color: #a5a5a5;
  background: #f0f0f0;
}

.memo textarea {
  border: none;
}

.vlabel {
  width: 24px;
  padding: 24px 5px 0;
  font: 14px/20px "Noto Sans CJK SC", sans-serif;
}

.holes {
  flex: 1;
  min-width: 0;
  display: flex;
  background: #daebff;
}

.holes-body {
  flex: 1;
  min-width: 0;
  display: flex;
  flex-direction: column;
  padding: 3px 4px 0 3px;
}

.drill {
  height: 256px;
  flex: none;
  display: flex;
}

.drill-main {
  flex: 1;
  min-width: 0;
}

.total {
  height: 32px;
  flex: none;
  padding: 0 24px 5px 3px;
  gap: 0;
}

.total label {
  width: 89px;
}

.sub {
  height: 96px;
  flex: none;
  border-bottom: none;
}

.sub h3 {
  height: 21px;
  line-height: 21px;
}

.sub.first {
  height: 99px;
}

.sub.first h3 {
  height: 24px;
  line-height: 26px;
}

.sub.last {
  flex: 1;
}

/* scroll bars */
.vscroll {
  width: 17px;
  flex: none;
  display: flex;
  flex-direction: column;
  align-items: center;
}

.hscroll {
  height: 17px;
  flex: none;
  display: flex;
  align-items: center;
}

.blue-bar {
  background: #8caad0;
}

.gray-bar {
  background: #f0f0f0;
}

.gray-bar.off {
  justify-content: space-between;
  border-left: 1px solid #e2e2e2;
}

.vscroll .up {
  border: 5px solid transparent;
  border-bottom-color: #44638f;
  border-top: none;
  margin: 6px 0;
}

.vscroll .down {
  border: 5px solid transparent;
  border-top-color: #44638f;
  border-bottom: none;
  margin: 6px 0;
}

.hscroll .left {
  border: 5px solid transparent;
  border-right-color: #44638f;
  border-left: none;
  margin: 0 7px 0 5px;
}

.hscroll .right {
  border: 5px solid transparent;
  border-left-color: #44638f;
  border-right: none;
  margin: 0 5px 0 auto;
}

.gray-bar .up,
.gray-bar .down,
.gray-bar .right {
  border-width: 4px;
}

.gray-bar .up {
  border-top: none;
  border-bottom-color: #444;
}

.gray-bar .down {
  border-bottom: none;
  border-top-color: #444;
}

.gray-bar .right {
  border-right: none;
  border-left-color: #222;
}

.gray-bar.off i {
  border-top-color: #888;
  border-bottom-color: #888;
}

.thumb {
  display: flex;
  align-items: center;
  justify-content: center;
  border: 1px solid #54719c;
  border-radius: 1px;
}

.vscroll .thumb {
  width: 16px;
  background: linear-gradient(90deg, #e8eef6 0, #d8e2ee 45%, #b8c9dd 46%, #c8d6e6);
}

.hscroll .thumb {
  height: 16px;
  background: linear-gradient(#e8eef6 0, #d8e2ee 50%, #b4c6da 51%, #c8d6e6);
}

.gray-bar .thumb {
  border-color: #979797;
}

.vscroll.gray-bar .thumb {
  background: linear-gradient(90deg, #f6f6f6, #e2e2e6 50%, #c4c4ca);
}

.hscroll.gray-bar .thumb {
  background: linear-gradient(#f6f6f6, #e2e2e6 50%, #c4c4ca);
}

.thumb b {
  width: 9px;
  height: 8px;
  background: repeating-linear-gradient(90deg, #8292a8 0 1px, transparent 1px 2px);
}

.vscroll .thumb b {
  background: repeating-linear-gradient(#8292a8 0 1px, transparent 1px 2px);
}

.gray-bar .thumb b {
  background: repeating-linear-gradient(90deg, #555 0 2px, transparent 2px 3px);
}

.vscroll.gray-bar .thumb b {
  background: repeating-linear-gradient(#555 0 2px, transparent 2px 3px);
}

.thumb.fill { flex: 1; }
.thumb.short { width: 159px; }
.thumb.long { width: 77%; margin-left: 14px; }
.params .thumb.long { width: 80%; margin-left: 17px; }
.thumb.mid { height: 180px; }
.drill .down { margin-top: auto; }
.thumb.tall { height: 502px; }
.holes > .vscroll .down { margin-top: auto; }

/* status bar */
.statusbar {
  height: 32px;
  flex: none;
  padding: 3px 16px 5px 3px;
  border-top: 1px solid #646464;
  background: linear-gradient(#d9e8ff, #bcd6fb);
}

.statusbar div {
  height: 100%;
  border: 1px solid #fff;
  border-top-color: #9aa8bc;
  border-left: none;
}

/* CAD window */
.cad {
  position: absolute;
  left: 0;
  top: 215px;
  bottom: 39px;
  width: 788px;
  padding-right: 9px;
  display: flex;
  flex-direction: column;
  overflow: hidden;
  border: 1px solid #5d6a73;
  border-width: 1px 1px 0 0;
  border-radius: 0 7px 0 0;
  background: rgba(214,248,252,0.82);
  backdrop-filter: blur(4px);
  font-family: "Noto Sans", "Noto Sans CJK SC", sans-serif;
  box-shadow: 1px 0 4px rgba(0,0,0,0.5);
}

.cad-caption {
  height: 31px;
  flex: none;
  display: flex;
  align-items: flex-end;
}

.quick {
  width: 117px;
  height: 23px;
  flex: none;
  display: flex;
  align-items: center;
  gap: 7px;
  padding-left: 3px;
  background: linear-gradient(#9b9b9b, #6a6a6a);
  border-top: 1px solid #555;
}

.cad-name {
  width: 128px;
  flex: none;
  padding: 0 0 8px 38px;
  white-space: nowrap;
}

.infocenter {
  width: 413px;
  height: 23px;
  flex: none;
  display: flex;
  align-items: center;
  background: linear-gradient(#929292, #5f5f5f);
  border: 1px solid #555;
  border-bottom: none;
}

.play {
  width: 13px;
  padding-left: 4px;
}

.search {
  flex: none;
  width: 180px;
  height: 21px;
  margin-right: 4px;
  border: 1px solid #ccc;
  background: #f6f6f6;
  box-shadow: none;
  font-style: italic;
}

.search::placeholder {
  color: #777;
}

.user {
  margin: 0 4px 0 8px;
}

.login {
  color: #fff;
  width: 86px;
}

.infocenter .dn {
  border: 3px solid transparent;
  border-top-color: #444;
  border-bottom: none;
  margin: 0 9px 0 3px;
}

.infocenter .bar {
  width: 1px;
  height: 16px;
  margin: 0 9px;
  background: #999;
}

.glass-btns {
  display: flex;
  flex: none;
  align-self: flex-start;
  margin-left: 20px;
  border: 1px solid #8d9ca4;
  border-top: none;
  border-radius: 0 0 5px 5px;
}

.glass-btns button {
  border-color: #9fb0b8;
}

.cad-menu {
  height: 18px;
  flex: none;
  display: flex;
  gap: 15px;
  padding-left: 13px;
  position: relative;
  border-top: 1px solid #777;
  background: linear-gradient(#fbfcfe, #d4dcee);
}

.tab-pop {
  position: absolute;
  left: 131px;
  top: 2px;
  display: flex;
}

.tab-pop span {
  width: 57px;
  height: 18px;
  line-height: 18px;
  text-align: center;
  color: #fff;
  background: #3f3f3f;
}

.tab-pop i {
  width: 11px;
  background: linear-gradient(90deg, #fff, #ddd);
}

.ribbon {
  height: 64px;
  flex: none;
  display: flex;
  gap: 1px;
  border-top: 3px solid #444;
  border-bottom: 1px solid #fff;
  background: linear-gradient(#d6d6d6, #8e8e8e);
}

.ribbon button {
  width: 60px;
  display: flex;
  flex-direction: column;
  align-items: center;
  justify-content: flex-end;
  gap: 2px;
  padding-bottom: 2px;
  color: #444;
  border: 1px solid #fafafa;
  border-right-color: #888;
  background: linear-gradient(#f4f4f4, #d8d8d8 60%, #f0f0f0);
}

.ribbon .cut {
  width: 16px;
  justify-content: flex-start;
  align-items: flex-end;
  padding: 8px 5px 0 0;
}

.dock {
  height: 11px;
  flex: none;
  border-bottom: 1px solid #fff;
  background: repeating-linear-gradient(135deg, #606060 0 3px, #6c6c6c 3px 5px);
}

.doc-title {
  height: 29px;
  flex: none;
  line-height: 33px;
  text-indent: -2px;
  border-bottom: 1px solid #777;
  background: linear-gradient(#98b4d2, #b4cbe6);
}

.drawing {
  background: #212830;
}

.dim text {
  font: 10px "Liberation Sans", sans-serif;
  fill: #0f0;
  text-anchor: middle;
}

.view-label {
  font-size: 12px;
  fill: #eee;
  text-anchor: end;
}

/* taskbar */
.sprites {
  position: absolute;
}

.taskbar {
  height: 39px;
  flex: none;
  position: relative;
  display: flex;
  gap: 4px;
  padding: 0 0 2px 6px;
  font: 13px/18px "Noto Sans", "Noto Sans CJK SC", sans-serif;
  color: #fff;
  border-top: 1px solid #55626e;
  background: linear-gradient(90deg, #1b232c 0, #27313a 700px, #2d4257 780px, #1c4a84 800px, #16457f);
}

.start {
  width: 50px;
}

.task {
  width: 72px;
  display: flex;
  align-items: center;
  gap: 4px;
  padding-left: 3px;
  white-space: nowrap;
  overflow: hidden;
  border: 1px solid rgba(200,215,225,0.6);
  border-radius: 3px;
  background: linear-gradient(135deg, rgba(255,255,255,0.5), rgba(255,255,255,0.12) 60%, rgba(255,255,255,0.2));
}

.task.active {
  background: linear-gradient(135deg, rgba(255,255,255,0.75), rgba(255,255,255,0.4));
}

.group {
  display: flex;
  width: 365px;
  border: 1px solid rgba(200,215,225,0.6);
  border-radius: 3px;
}

.group .task {
  flex: 1;
  min-width: 0;
  border: none;
  border-radius: 0;
}

.pair-xls {
  width: 145px;
}

.tray {
  margin-left: auto;
  display: flex;
  align-items: center;
  gap: 7px;
}

.clock {
  width: 74px;
  flex: none;
  display: flex;
  flex-direction: column;
  align-items: center;
  justify-content: center;
  font-size: 12px;
}

.peek {
  width: 13px;
  flex: none;
  border: 1px solid #4d78ab;
  background: #2c5a92;
}
```
